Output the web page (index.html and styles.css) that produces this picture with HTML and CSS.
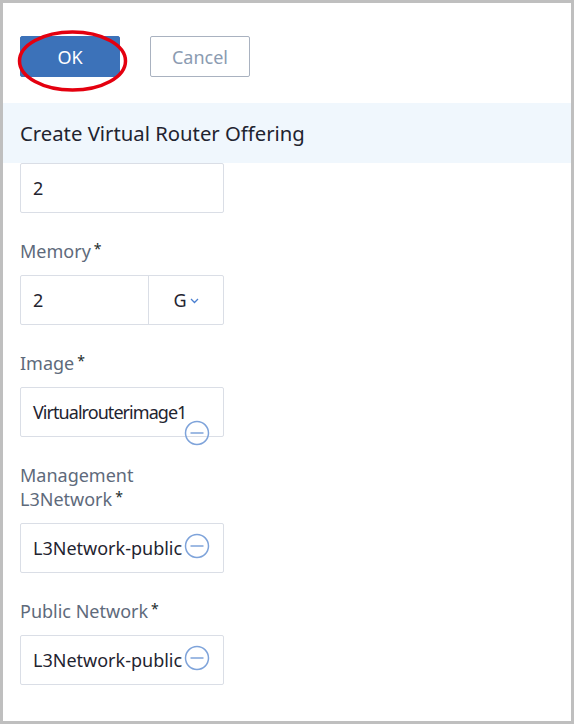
FILE: index.html
```html
<!DOCTYPE html>
<html>
<head>
<meta charset="utf-8">
<link rel="stylesheet" href="styles.css">
</head>
<body>
<div class="frame">
  <div class="toolbar">
    <div class="ok-wrap">
      <button class="btn btn-ok">OK</button>
      <svg class="ring" width="115" height="66" viewBox="0 0 115 66"><ellipse cx="57.5" cy="33" rx="53" ry="29" fill="none" stroke="#e4000f" stroke-width="3.5"/></svg>
    </div>
    <button class="btn btn-cancel">Cancel</button>
  </div>
  <div class="header">Create Virtual Router Offering</div>
  <div class="form">
    <div class="field">
      <div class="input"><span class="val">2</span></div>
    </div>
    <div class="field">
      <div class="label">Memory<span class="req">*</span></div>
      <div class="input split">
        <span class="val left">2</span>
        <span class="unit">G<svg class="chev" width="9" height="6" viewBox="0 0 9 6"><path d="M1 1l3.5 3.5L8 1" fill="none" stroke="#4a7fd0" stroke-width="1.3"/></svg></span>
      </div>
    </div>
    <div class="field">
      <div class="label">Image<span class="req">*</span></div>
      <div class="input"><span class="val tight">Virtualrouterimage1</span>
        <svg class="minus low" width="26" height="26" viewBox="0 0 26 26"><circle cx="13" cy="13" r="11.5" fill="none" stroke="#7ea3da" stroke-width="1.5"/><path d="M6.5 13h13" stroke="#7ea3da" stroke-width="1.5"/></svg>
      </div>
    </div>
    <div class="field">
      <div class="label">Management<br>L3Network<span class="req">*</span></div>
      <div class="input"><span class="val">L3Network-public</span>
        <svg class="minus" width="26" height="26" viewBox="0 0 26 26"><circle cx="13" cy="13" r="11.5" fill="none" stroke="#7ea3da" stroke-width="1.5"/><path d="M6.5 13h13" stroke="#7ea3da" stroke-width="1.5"/></svg>
      </div>
    </div>
    <div class="field">
      <div class="label">Public Network<span class="req">*</span></div>
      <div class="input"><span class="val">L3Network-public</span>
        <svg class="minus" width="26" height="26" viewBox="0 0 26 26"><circle cx="13" cy="13" r="11.5" fill="none" stroke="#7ea3da" stroke-width="1.5"/><path d="M6.5 13h13" stroke="#7ea3da" stroke-width="1.5"/></svg>
      </div>
    </div>
  </div>
</div>
</body>
</html>
```

FILE: styles.css
```css
html, body {
  margin: 0;
  padding: 0;
  background: #bfbfbf;
}
body {
  padding: 3px;
  font-family: "Noto Sans", "Open Sans", sans-serif;
}
.frame {
  width: 568px;
  height: 718px;
  background: #ffffff;
  overflow: hidden;
}
.toolbar {
  display: flex;
  gap: 30px;
  padding: 33px 0 26px 17px;
}
.ok-wrap {
  position: relative;
}
.btn {
  width: 100px;
  height: 41px;
  font-family: inherit;
  font-size: 18px;
  border-radius: 2px;
  padding: 0;
  box-sizing: border-box;
}
.btn-ok {
  background: #3c72b9;
  color: #ffffff;
  border: 1px solid #3c72b9;
  display: block;
}
.btn-cancel {
  background: #ffffff;
  color: #8b9bb1;
  border: 1px solid #a9b2c0;
}
.ring {
  position: absolute;
  left: -5px;
  top: -8px;
}
.header {
  height: 60px;
  background: #f0f7fd;
  padding-left: 17px;
  display: flex;
  align-items: center;
  font-size: 20.3px;
  color: #1f2430;
}
.form {
  padding-left: 17px;
}
.field {
  margin-bottom: 26px;
}
.label {
  font-size: 18px;
  line-height: 24px;
  height: auto;
  color: #5e6a7b;
  margin-bottom: 12px;
}
.req {
  font-size: 14px;
  line-height: 0;
  color: #1a2a2a;
  position: relative;
  top: -4px;
  margin-left: 3px;
}
.input {
  position: relative;
  width: 204px;
  height: 50px;
  box-sizing: border-box;
  border: 1px solid #dadee6;
  border-radius: 2px;
  display: flex;
  align-items: center;
  padding-left: 12px;
  font-size: 18px;
  color: #1f2430;
  white-space: nowrap;
}
.tight {
  letter-spacing: -0.95px;
}
.split {
  padding-left: 0;
}
.split .left {
  width: 128px;
  height: 100%;
  box-sizing: border-box;
  padding-left: 12px;
  border-right: 1px solid #dadee6;
  display: flex;
  align-items: center;
}
.unit {
  flex: 1;
  display: flex;
  align-items: center;
  justify-content: center;
  gap: 3px;
}
.chev {
  margin-top: 2px;
}
.minus {
  position: absolute;
  left: 163px;
  top: 9px;
}
.minus.low {
  top: 32px;
}
```
